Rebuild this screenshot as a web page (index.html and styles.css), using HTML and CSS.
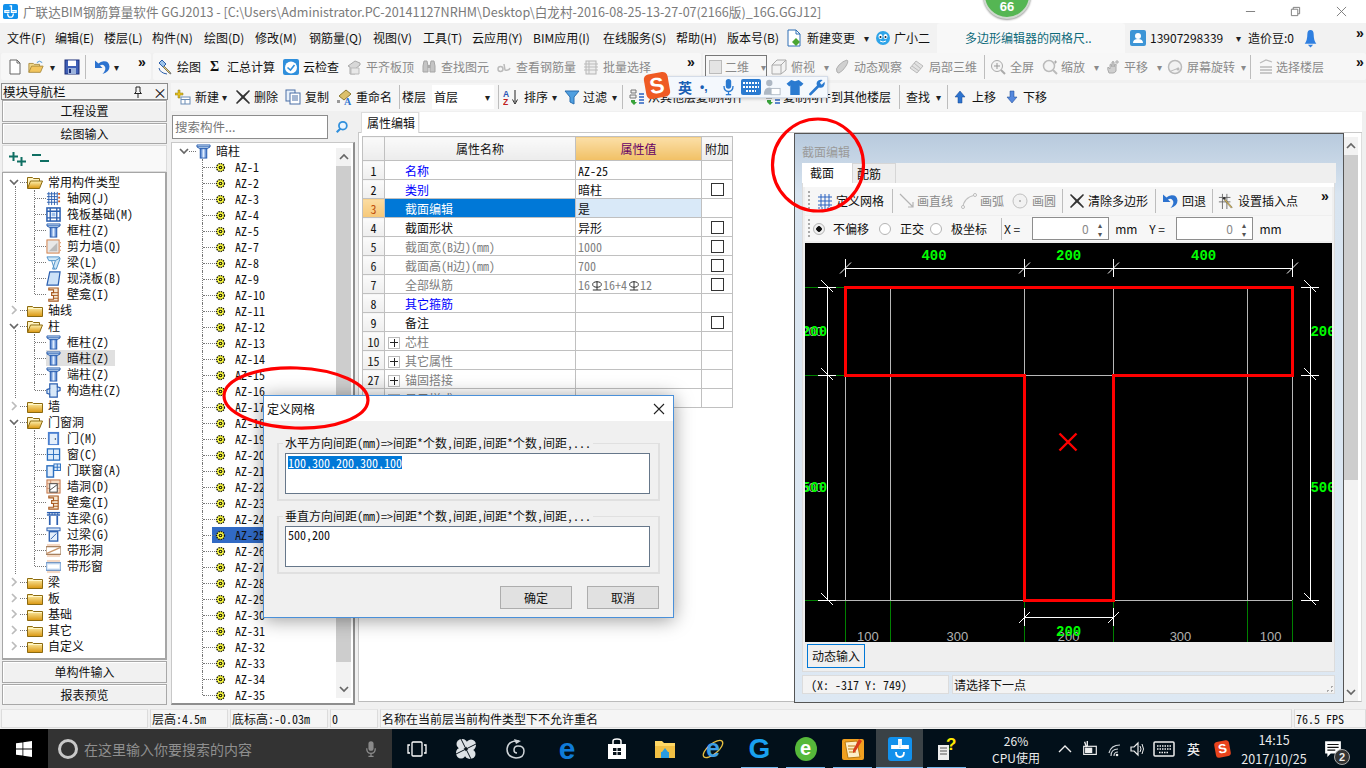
FILE: index.html
```html
<!DOCTYPE html>
<html lang="zh-CN">
<head>
<meta charset="utf-8">
<title>广联达BIM钢筋算量软件 GGJ2013</title>
<link rel="stylesheet" href="styles.css">
</head>
<body>
<svg class="defs" width="0" height="0">
<defs>
<linearGradient id="gy" x1="0" y1="0" x2="0" y2="1"><stop offset="0" stop-color="#fff2b0"/><stop offset="1" stop-color="#d9960f"/></linearGradient>
<linearGradient id="gb" x1="0" y1="0" x2="1" y2="0"><stop offset="0" stop-color="#2a62c0"/><stop offset=".5" stop-color="#dfeeff"/><stop offset="1" stop-color="#2a62c0"/></linearGradient>
<symbol id="new" viewBox="0 0 16 16"><path d="M3 1h7l3 3v11H3z" fill="#fff" stroke="#666"/><path d="M10 1v3h3" fill="none" stroke="#666"/></symbol>
<symbol id="open" viewBox="0 0 18 16"><path d="M1 14V4h5l1 1h6v2" fill="#f0d78a" stroke="#a98a3c"/><path d="M1 14l3-7h13l-3 7z" fill="#f3c65f" stroke="#a98a3c"/><path d="M10 3q3-3 6 0" fill="none" stroke="#3a8ad0"/></symbol>
<symbol id="save" viewBox="0 0 16 16"><rect x="1" y="1" width="14" height="14" fill="#3f5fb5" stroke="#1c2f78"/><rect x="4" y="1.500" width="8" height="5.500" fill="#fff"/><rect x="4" y="9" width="8" height="6" fill="#9db3dc"/><rect x="5" y="10" width="2" height="4" fill="#1c2f78"/></symbol>
<symbol id="undo" viewBox="0 0 16 16"><path d="M1 1.500v7.500h7.500L6 6.500Q8.500 5 10.500 7q2.500 3-2 8 7-2 7-7.500Q15 2 9.500 2.300 6.500 2.500 4.500 4.500z" fill="#2d73cf"/></symbol>
<symbol id="draw" viewBox="0 0 16 16"><path d="M5 1l4 4-3 3-4-4z" fill="#9cc4ea" stroke="#2b5ea8"/><path d="M6 8l6 6 2 1-1-2-6-6" fill="#f3d65a" stroke="#777"/><path d="M2 9q1 5 8 6" fill="none" stroke="#2b5ea8"/></symbol>
<symbol id="cloud" viewBox="0 0 16 16"><rect x="0" y="0" width="16" height="16" rx="2" fill="#2f8fdc"/><circle cx="8" cy="8.500" r="6" fill="#fff"/><path d="M4.500 8.500l3 2.500 4-5" fill="none" stroke="#2f8fdc" stroke-width="1.600"/></symbol>
<symbol id="align" viewBox="0 0 16 16"><path d="M2 7l7-5 5 2v2l-5 4v5H4V8z" fill="#d8d8d8" stroke="#aaa"/><path d="M5 9h8v6H5z" fill="#e8e8e8" stroke="#bbb"/></symbol>
<symbol id="binoc" viewBox="0 0 16 16"><path d="M2 7l1-5h3l1 5v6H2zM9 7l1-5h3l1 5v6H9z" fill="#c4c4c4" stroke="#a5a5a5"/><rect x="6.500" y="6" width="3" height="3" fill="#aaa"/></symbol>
<symbol id="rebar" viewBox="0 0 16 16"><circle cx="4.500" cy="10" r="2.500" fill="none" stroke="#bbb" stroke-width="1.500"/><path d="M8 5l1 6q4 1 5-2" fill="none" stroke="#bbb" stroke-width="1.500"/></symbol>
<symbol id="batch" viewBox="0 0 16 16"><rect x="3" y="2" width="10" height="13" fill="#eee" stroke="#b5b5b5"/><path d="M1 5h14M1 8h14M1 11h14M6 2v13" stroke="#bbb" fill="none"/></symbol>
<symbol id="cube" viewBox="0 0 16 16"><path d="M1 6l5-5h9v10l-5 4H1z" fill="#f3f3f3" stroke="#aaa"/><path d="M1 6h9v9M10 6l5-5" fill="none" stroke="#aaa"/></symbol>
<symbol id="orbit" viewBox="0 0 16 16"><path d="M3 13q-2-3 2-7t8-5q2 1-1 6t-7 7q-1 0-2-1z" fill="#d0d0d0" stroke="#b0b0b0"/></symbol>
<symbol id="local" viewBox="0 0 16 16"><path d="M1 9l6-7 7 5-6 7z" fill="#e2e2e2" stroke="#bbb"/><path d="M5 4l7 6M3 7l7 5" stroke="#bbb"/></symbol>
<symbol id="full" viewBox="0 0 16 16"><circle cx="7" cy="7" r="5.500" fill="#f4f4f4" stroke="#aaa"/><path d="M11 11l4 4" stroke="#aaa" stroke-width="2"/><path d="M7 4v6M4 7h6" stroke="#999"/></symbol>
<symbol id="zoom" viewBox="0 0 16 16"><circle cx="7" cy="7" r="5.500" fill="#f4f4f4" stroke="#bbb" stroke-width="1.500"/><path d="M11 11l4 4" stroke="#bbb" stroke-width="2"/><path d="M12 3h3M13.500 1.500v3" stroke="#aaa"/></symbol>
<symbol id="pan" viewBox="0 0 16 16"><path d="M4 14q-2-4-1-6l2 2V6q0-1 1-1l1 3V3q1-1 2 0v5l1-3q2 0 1 2v5q-1 2-3 2z" fill="#cfcfcf" stroke="#aaa"/><path d="M12 1v4M10 3h4" stroke="#aaa"/></symbol>
<symbol id="rot" viewBox="0 0 16 16"><circle cx="8" cy="8" r="6.500" fill="#f2f2f2" stroke="#bbb" stroke-width="1.500"/><path d="M4 12l8-3" stroke="#bbb"/><circle cx="11" cy="10" r="1.500" fill="#bbb"/></symbol>
<symbol id="floor" viewBox="0 0 16 16"><path d="M2 4l6-3 6 2M2 8h12M2 11h12M2 14h12" fill="none" stroke="#bbb" stroke-width="1.300"/></symbol>
<symbol id="newc" viewBox="0 0 16 16"><path d="M3 1v3H0v2h3v3h2V6h3V4H5V1z" fill="#e6c020" stroke="#8a7a10" stroke-width=".5"/><rect x="6" y="8" width="9" height="7" fill="#fff" stroke="#6a8cb5"/><path d="M6 10.500h9M10 10.500V15" stroke="#6a8cb5"/></symbol>
<symbol id="x" viewBox="0 0 16 16"><path d="M2 1l6 5.500L14 1l1 1-5.500 6L15 14l-1 1-6-5.500L2 15l-1-1 5.500-6L1 2z" fill="#333"/></symbol>
<symbol id="copy" viewBox="0 0 16 16"><rect x="1" y="1" width="9" height="11" fill="#e8f1fb" stroke="#4a6fa5"/><rect x="5" y="4" width="10" height="11" fill="#fff" stroke="#4a6fa5"/><path d="M7 7h6M7 9h6M7 11h6" stroke="#4a6fa5"/></symbol>
<symbol id="rename" viewBox="0 0 16 16"><path d="M3 7l7-6 5 4-7 6z" fill="#dcc06a" stroke="#8c7a30"/><text x="8" y="16" font-size="10" font-weight="700" font-family="Liberation Serif" fill="#2d73cf">A</text><rect x="1" y="11" width="3" height="3" fill="#999"/></symbol>
<symbol id="sort" viewBox="0 0 16 16"><text x="0" y="7.500" font-size="8.500" font-weight="700" font-family="Liberation Sans" fill="#2a56b5">A</text><text x="0" y="16" font-size="8.500" font-weight="700" font-family="Liberation Sans" fill="#c02020">Z</text><path d="M12 1v12M9.500 10.500L12 15l2.500-4.500" fill="none" stroke="#222"/></symbol>
<symbol id="filter" viewBox="0 0 16 16"><path d="M1 2h14l-5 6v7l-4-2V8z" fill="#4f9fe0" stroke="#2a6fb0"/></symbol>
<symbol id="copyto" viewBox="0 0 16 16"><path d="M2 1h5v3H2z" fill="#eee" stroke="#777"/><path d="M1 6h6v3H1z" fill="#eee" stroke="#777"/><path d="M2 11h4v2h2l-3 3-3-3z" fill="#38a23a"/><path d="M10 5h5M10 8h5M10 11h5M10 14h5" stroke="#2a62c0" stroke-width="1.400"/></symbol>
<symbol id="up" viewBox="0 0 12 14"><path d="M6 1l5 6H8v6H4V7H1z" fill="#2d73cf" stroke="#16458c" stroke-width=".5"/></symbol>
<symbol id="down" viewBox="0 0 12 14"><path d="M6 13l5-6H8V1H4v6H1z" fill="#5588dd" stroke="#16458c" stroke-width=".5"/></symbol>
<symbol id="search" viewBox="0 0 16 16"><circle cx="9" cy="6.500" r="4.500" fill="#eaf5ff" stroke="#2f8fdc" stroke-width="2"/><path d="M6 10l-4 4" stroke="#2f8fdc" stroke-width="2.500"/></symbol>
<symbol id="doc" viewBox="0 0 14 18"><path d="M1 1h8l4 4v12H1z" fill="#fff" stroke="#2f6fb5"/><path d="M9 1v4h4" fill="none" stroke="#2f6fb5"/><path d="M9 9l4 4-4 4-4-4z" fill="#4aa531"/></symbol>
<symbol id="mascot" viewBox="0 0 16 16"><circle cx="8" cy="8" r="7" fill="#2fa4e8"/><ellipse cx="5.500" cy="6.500" rx="2" ry="2.500" fill="#fff"/><ellipse cx="10.500" cy="6.500" rx="2" ry="2.500" fill="#fff"/><circle cx="5.500" cy="7" r="1" fill="#123"/><circle cx="10.500" cy="7" r="1" fill="#123"/><path d="M5 11q3 2 6 0" stroke="#fff" fill="none"/></symbol>
<symbol id="user" viewBox="0 0 16 16"><rect width="16" height="16" rx="2" fill="#3d95d6"/><circle cx="8" cy="6" r="3" fill="#fff"/><path d="M3 13q0-4 5-4t5 4z" fill="#fff"/></symbol>
<symbol id="bell" viewBox="0 0 12 18"><path d="M6 1q3 0 3 4 0 6 2.500 9H.5Q3 11 3 5q0-4 3-4z" fill="#2f7fe0"/><path d="M3.500 15h5L6 17.500z" fill="#2f7fe0"/></symbol>
<symbol id="pin" viewBox="0 0 10 12"><path d="M3 1h4v5l1.500 1.500h-7L3 6zM5 8v4" fill="none" stroke="#222"/></symbol>
<symbol id="pluses" viewBox="0 0 17 16"><path d="M3.500 1v3.500H0v2h3.500V10h2V6.500H9v-2H5.500V1z" fill="#0f6f63"/><path d="M11.500 6v3.500H8v2h3.500V15h2v-3.500H17v-2h-3.500V6z" fill="#0f6f63"/></symbol>
<symbol id="minuses" viewBox="0 0 17 9"><path d="M0 0h9v2H0zM8 6h9v2H8z" fill="#0f6f63"/></symbol>
<symbol id="col" viewBox="0 0 16 16"><path d="M1 1h14v2l-3 2H4L1 3z" fill="#cfe3f7" stroke="#2b5fb0"/><path d="M1 3h14" stroke="#2b5fb0"/><rect x="4.500" y="5" width="7" height="10" fill="url(#gb)" stroke="#2b5fb0"/></symbol>
<symbol id="fc" viewBox="0 0 16 13"><path d="M.5 12.500v-10h5l1 1h9v9z" fill="url(#gy)" stroke="#8c6a10"/><path d="M1 4.500h14" stroke="#fff7c8"/></symbol>
<symbol id="fo" viewBox="0 0 16 13"><path d="M.5 12V1.500h5l1 1h6v2.500" fill="#fff4c2" stroke="#8c6a10"/><path d="M.5 12.500l3-7.500h12l-3 7.500z" fill="url(#gy)" stroke="#8c6a10"/></symbol>
<symbol id="gear" viewBox="0 0 12 12"><circle cx="6" cy="6" r="4.300" fill="#ffff40" stroke="#111" stroke-width="1.500" stroke-dasharray="1.500 1"/><circle cx="6" cy="6" r="2" fill="#111"/><circle cx="6" cy="6" r=".9" fill="#ffff40"/></symbol>
<symbol id="gridn" viewBox="0 0 16 16"><path d="M1 3h11M1 6h11M1 9h11M1 12h11M3 1v14M6 1v14M9 1v14M12 1v14" stroke="#2b5fb0" fill="none"/><path d="M14 2v2M14 6v2M14 10v2" stroke="#d05a20" stroke-width="2"/></symbol>
<symbol id="raft" viewBox="0 0 16 16"><rect x="1" y="1" width="14" height="14" fill="#fff" stroke="#2b5fb0" stroke-width="1.600"/><path d="M1 4.500h14M1 11.500h14M4.500 1v14M11.500 1v14" stroke="#2b5fb0" stroke-width="1.400"/><rect x="6" y="6" width="4" height="4" fill="#9fc0ea"/></symbol>
<symbol id="wall" viewBox="0 0 16 16"><rect x="1" y="1" width="13" height="14" fill="#e8e8e8" stroke="#d07a40"/><path d="M3 13l9-9v9z" fill="#bbb"/><path d="M15 4h1M15 8h1M15 12h1" stroke="#d07a40"/></symbol>
<symbol id="beam" viewBox="0 0 16 16"><path d="M1 2h13l1 2-4 11H7l3-9H3z" fill="#cfe7f7" stroke="#4a8fc8"/><path d="M6 6l3 9M10 6l5-3" stroke="#4a8fc8" fill="none"/></symbol>
<symbol id="slab" viewBox="0 0 16 16"><path d="M4 1h11l-2 14H1z" fill="#cde2f8" stroke="#2b5fb0" stroke-width="1.300"/></symbol>
<symbol id="niche" viewBox="0 0 16 16"><path d="M3 1h10v14H3v-2h5V9H6V6h2V3H3z" fill="#f6e7d2" stroke="#a85a20" stroke-width="1.200"/><path d="M8 6h5M8 9h5M8 12h5" stroke="#a85a20"/></symbol>
<symbol id="gzz" viewBox="0 0 16 16"><path d="M4 1h8v3l3 1v3l-3 1v6H4v-3L1 11V7l3-1z" fill="#d8e8f8" stroke="#2b5fb0" stroke-width="1.300"/><path d="M12 4v5M4 6v6" stroke="#2b5fb0"/></symbol>
<symbol id="door" viewBox="0 0 16 16"><rect x="2" y="1" width="12" height="14" fill="#4a7fd0"/><rect x="4" y="3" width="8" height="11" fill="#e4effb"/><circle cx="10" cy="8.500" r=".8" fill="#234"/></symbol>
<symbol id="win" viewBox="0 0 16 16"><rect x="1.500" y="2" width="13" height="12" fill="#dcebfb" stroke="#2b6fc0" stroke-width="1.400"/><path d="M8 2v12M1.500 8h13" stroke="#2b6fc0"/></symbol>
<symbol id="dw" viewBox="0 0 16 16"><rect x="1" y="3" width="7" height="12" fill="#e4effb" stroke="#2b6fc0" stroke-width="1.500"/><rect x="8.500" y="1" width="7" height="7" fill="#dcebfb" stroke="#2b6fc0"/><path d="M12 1v7M8.500 4.500h7" stroke="#2b6fc0"/></symbol>
<symbol id="hole" viewBox="0 0 16 16"><rect x="1" y="1" width="14" height="14" fill="#f6dcc4" stroke="#c07040"/><path d="M1 5h14M1 10h14M5 1v4M11 10v5" stroke="#d09070"/><rect x="4" y="5" width="8" height="9" fill="#fff" stroke="#444"/><path d="M4 12l8-6" stroke="#444"/></symbol>
<symbol id="ll" viewBox="0 0 16 16"><rect x="1" y="1" width="14" height="4" fill="#2b5fb0"/><path d="M4 5v10M12 5v10" stroke="#2b5fb0" stroke-width="1.800"/><path d="M1 3h14" stroke="#fff" stroke-dasharray="2 1"/></symbol>
<symbol id="gl" viewBox="0 0 16 16"><rect x="1" y="1" width="14" height="3" fill="#d7e6f7" stroke="#2b5fb0"/><rect x="3.500" y="5" width="9" height="10" fill="#e4effb" stroke="#2b5fb0" stroke-width="1.400"/><path d="M5 13l6-6" stroke="#2b5fb0"/></symbol>
<symbol id="sh" viewBox="0 0 16 16"><path d="M1 1h14v14H1z" fill="#f4d8c4"/><rect x="0" y="4" width="16" height="8" fill="#fff" stroke="#8a5a30"/><path d="M1 11l14-6" stroke="#c89468" stroke-width="1.500"/></symbol>
<symbol id="sw" viewBox="0 0 16 16"><path d="M1 1h14v14H1z" fill="#f4d8c4"/><rect x="0" y="4" width="16" height="8" fill="#d7e6f7" stroke="#4a7fc0"/><rect x="2" y="6" width="12" height="4" fill="#fff"/></symbol>
<symbol id="grid2" viewBox="0 0 16 16"><path d="M1 4h14M1 8h14M1 12h14M4 1v13M8 1v13M12 1v13" stroke="#2b62c0" fill="none"/><path d="M1 15h14" stroke="#2b62c0" stroke-dasharray="2 1"/></symbol>
<symbol id="line" viewBox="0 0 16 16"><path d="M1 1l13 13M9 14h5V9" fill="none" stroke="#b4b4b4" stroke-width="1.200"/></symbol>
<symbol id="arc" viewBox="0 0 16 16"><path d="M2 15Q2 5 14 2" fill="none" stroke="#c0c0c0" stroke-width="1.200"/><circle cx="2" cy="14" r="1.500" fill="#fff" stroke="#bbb"/><circle cx="14" cy="2" r="1.500" fill="#fff" stroke="#bbb"/></symbol>
<symbol id="circ" viewBox="0 0 16 16"><circle cx="8" cy="8" r="7" fill="#f2f2f2" stroke="#c0c0c0"/><circle cx="8" cy="8" r="1" fill="#aaa"/></symbol>
<symbol id="ins" viewBox="0 0 18 18"><path d="M5 1v17M10 1v17M1 5h13M1 10h13" stroke="#666" fill="none"/><path d="M8 7l8 9-1 1-8-9z" fill="#e9c040" stroke="#555" stroke-width=".6"/><circle cx="7" cy="6" r="1.500" fill="#333"/></symbol>
<symbol id="reb" viewBox="0 0 10 10"><ellipse cx="5" cy="4" rx="4.300" ry="2.700" fill="none" stroke="currentColor"/><path d="M5 .5v9M.8 9.500h8.400" stroke="currentColor"/></symbol>
<symbol id="chev" viewBox="0 0 10 10"><path d="M1 3l4 4 4-4" fill="none" stroke="#666" stroke-width="1.700"/></symbol>
<symbol id="chevr" viewBox="0 0 10 10"><path d="M3 1l4 4-4 4" fill="none" stroke="#bbb" stroke-width="1.700"/></symbol>
<symbol id="chevu" viewBox="0 0 10 10"><path d="M1 7l4-4 4 4" fill="none" stroke="#666" stroke-width="1.700"/></symbol>
<symbol id="mic" viewBox="0 0 14 20"><rect x="4" y="1" width="6" height="11" rx="3" fill="currentColor"/><path d="M2 9q0 6 5 6t5-6M7 15v3M4 18.500h6" fill="none" stroke="currentColor" stroke-width="1.500"/></symbol>
<symbol id="kb" viewBox="0 0 22 16"><rect x="1" y="1" width="20" height="14" rx="1" fill="none" stroke="currentColor" stroke-width="1.500"/><path d="M4 5h14M4 8h14M6 11.500h10" stroke="currentColor" stroke-width="1.500" stroke-dasharray="1.500 1"/></symbol>
<symbol id="kbb" viewBox="0 0 20 16"><rect x="0" y="0" width="20" height="16" rx="2" fill="#2a7ad0"/><path d="M2 4h16M2 8h16M5 12h10" stroke="#fff" stroke-width="1.800" stroke-dasharray="2 1"/></symbol>
<symbol id="imeu" viewBox="0 0 20 18"><circle cx="7" cy="4" r="3.500" fill="#aeb8c4"/><path d="M1 17q0-8 6-8t5 8z" fill="#aeb8c4"/><rect x="9" y="10" width="10" height="7" fill="#fff" stroke="#aeb8c4"/></symbol>
<symbol id="shirt" viewBox="0 0 18 18"><path d="M5 1l4 1.500L13 1l5 4-3 3-1-1v10H4V7L3 8 0 5z" fill="#2a7ad0"/></symbol>
<symbol id="wrench" viewBox="0 0 18 18"><path d="M17 3l-3 3-2-2 3-3q-4-1-6 2-1 2 0 4l-8 8q-1 1 0 2t2 0l8-8q3 1 5-1 2-2 1-5z" fill="#2a7ad0"/></symbol>
<symbol id="win10" viewBox="0 0 16 16"><path d="M0 2.300l6.500-.9v6.200H0zM7.300 1.300L16 0v7.600H7.300zM0 8.400h6.500v6.200L0 13.700zM7.300 8.400H16V16l-8.700-1.300z" fill="#fff"/></symbol>
<symbol id="tv" viewBox="0 0 20 16"><rect x="5" y="1" width="10" height="14" rx="1" fill="none" stroke="#fff" stroke-width="1.300"/><path d="M3 4H1v8h2M17 4h2v8h-2" fill="none" stroke="#fff" stroke-width="1.300"/></symbol>
<symbol id="fan" viewBox="0 0 22 22"><g fill="#dde2e6"><ellipse cx="7" cy="6" rx="5.500" ry="5"/><ellipse cx="16" cy="7" rx="5" ry="5.500"/><ellipse cx="15" cy="16" rx="5.500" ry="5"/><ellipse cx="6" cy="15" rx="5" ry="5.500"/></g><circle cx="11" cy="11" r="1.500" fill="#0a141c"/><path d="M11 11L6 1M11 11l10-5M11 11l5 10M11 11L1 16" stroke="#0a141c"/></symbol>
<symbol id="swirl" viewBox="0 0 22 22"><path d="M14 3Q3 2 2 11q0 8 9 9 8 0 8-7 0-5-6-5-4 0-4 4 0 3 3 3" fill="none" stroke="#cfd4d8" stroke-width="1.500"/><path d="M9 1l7 2-5 3z" fill="#cfd4d8"/></symbol>
<symbol id="store" viewBox="0 0 20 22"><path d="M1 6h18v15H1z" fill="#fff"/><path d="M6 6V3q0-2 4-2t4 2v3" fill="none" stroke="#fff" stroke-width="1.500"/><path d="M6 10h3.500v3H6zM10.500 10H14v3h-3.500zM6 14h3.500v3H6zM10.500 14H14v3h-3.500z" fill="#08131b"/></symbol>
<symbol id="fold" viewBox="0 0 22 20"><path d="M1 2h7l2 2h11v15H1z" fill="#ffd764"/><path d="M1 7h20v12H1z" fill="#f2c044"/><rect x="7" y="13" width="8" height="6" fill="#2a9be0"/><path d="M8 13l3-4 3 4z" fill="#2a9be0"/></symbol>
<symbol id="note" viewBox="0 0 24 24"><rect x="1" y="2" width="22" height="21" rx="2" fill="#f0a020"/><path d="M4 5l12-1 3 16-12 1z" fill="#fdeec8" stroke="#b97a10"/><path d="M7 9h7M7 12h8M8 15h7" stroke="#b97a10"/><path d="M18 2l3 2-7 11-2 1 0-3z" fill="#d83c1c"/></symbol>
<symbol id="gld" viewBox="0 0 24 24"><path d="M11 3h2v6h7v2h-7a4 4 0 0 1-2 0H4V9h7zM8 15q0 5 4 5t4-5" fill="none" stroke="#fff" stroke-width="1.800"/></symbol>
<symbol id="gldsm" viewBox="0 0 16 16"><rect width="16" height="16" rx="2" fill="#1291ec"/><path d="M7 2h2v5h5v2H9V7.500M7 7H2v2h5M5 10q0 4 3 4t3-4" fill="none" stroke="#fff" stroke-width="1.400"/></symbol>
<symbol id="iering" viewBox="0 0 24 24"><ellipse cx="12" cy="12" rx="12" ry="5" transform="rotate(-40 12 12)" fill="none" stroke="#e8c040" stroke-width="1.300"/><text x="12" y="20" text-anchor="middle" font-size="25" font-weight="700" font-family="Liberation Sans" fill="#3d9fe6">e</text></symbol>
<symbol id="pc" viewBox="0 0 20 24"><rect x="1" y="8" width="11" height="15" fill="#eee"/><path d="M3 11h7M3 14h7M3 17h7" stroke="#555"/></symbol>
<symbol id="caret" viewBox="0 0 14 10"><path d="M1 8l6-6 6 6" fill="none" stroke="#eee" stroke-width="1.400"/></symbol>
<symbol id="batt" viewBox="0 0 18 20"><rect x="2" y="7" width="14" height="9" fill="none" stroke="#eee" stroke-width="1.300"/><rect x="3.500" y="8.500" width="8" height="6" fill="#eee"/><path d="M3 2l2 6M6 1v6" stroke="#eee" stroke-width="1.500"/></symbol>
<symbol id="wifi" viewBox="0 0 16 16"><path d="M3 15Q3 8 10 8M1 12Q3 4 12 4M6 15q0-4 4-4" fill="none" stroke="#cfd4d8" stroke-width="1.200"/><circle cx="9" cy="14" r="1.300" fill="#eee"/></symbol>
<symbol id="vol" viewBox="0 0 16 16"><path d="M1 6h3l4-4v12l-4-4H1z" fill="none" stroke="#eee" stroke-width="1.200"/><path d="M10 5q2 3 0 6M12 3q3 5 0 10" fill="none" stroke="#eee"/></symbol>
<symbol id="notif" viewBox="0 0 16 16"><path d="M1 1h14v11H6l-3 3v-3H1z" fill="#fff"/><path d="M3 4h10M3 6.500h10M3 9h7" stroke="#111"/></symbol>
</defs>
</svg>

<div class="app">
  <header class="titlebar">
    <svg class="logo"><use href="#gldsm"/></svg>
    <span class="title">广联达BIM钢筋算量软件 GGJ2013 - [C:\Users\Administrator.PC-20141127NRHM\Desktop\白龙村-2016-08-25-13-27-07(2166版)_16G.GGJ12]</span>
    <div class="winctl">
      <svg viewBox="0 0 12 12"><path d="M1 6h10" stroke="#777" fill="none"/></svg>
      <svg viewBox="0 0 12 12"><path d="M1.500 3.500h7v7h-7zM3.500 3.500v-2h7v7h-2" stroke="#777" fill="none"/></svg>
      <svg viewBox="0 0 12 12"><path d="M1 1l10 10M11 1L1 11" stroke="#777" fill="none"/></svg>
    </div>
  </header>

  <nav class="menubar">
    <span>文件(F)</span><span>编辑(E)</span><span>楼层(L)</span><span>构件(N)</span><span>绘图(D)</span><span>修改(M)</span><span>钢筋量(Q)</span><span>视图(V)</span><span>工具(T)</span><span>云应用(Y)</span><span>BIM应用(I)</span><span>在线服务(S)</span><span>帮助(H)</span><span>版本号(B)</span>
    <svg class="i doc"><use href="#doc"/></svg><span>新建变更</span><b class="arr">▾</b>
    <svg class="i"><use href="#mascot"/></svg><span>广小二</span>
    <span class="newsbox">多边形编辑器的网格尺..</span>
    <svg class="i"><use href="#user"/></svg><span>13907298339</span><b class="arr">▾</b><span>造价豆:0</span>
    <svg class="i bell"><use href="#bell"/></svg><b class="more">»</b>
  </nav>

  <div class="toolrow">
    <div class="tb tb-a">
      <svg class="i"><use href="#new"/></svg><svg class="i"><use href="#open"/></svg><b class="arr">▾</b><svg class="i"><use href="#save"/></svg><i class="sep"></i><svg class="i"><use href="#undo"/></svg><b class="arr">▾</b><b class="more">»</b>
    </div>
    <div class="tb tb-b">
      <svg class="i"><use href="#draw"/></svg><span>绘图</span><b class="sigma">Σ</b><span>汇总计算</span><svg class="i"><use href="#cloud"/></svg><span>云检查</span>
      <svg class="i"><use href="#align"/></svg><span class="dis">平齐板顶</span><svg class="i"><use href="#binoc"/></svg><span class="dis">查找图元</span><svg class="i"><use href="#rebar"/></svg><span class="dis">查看钢筋量</span><svg class="i"><use href="#batch"/></svg><span class="dis">批量选择</span><b class="more">»</b>
    </div>
    <div class="tb tb-c">
      <div class="combo2d"><i class="sq"></i><span class="dis">二维</span><b class="arr dis">▾</b></div>
      <svg class="i"><use href="#cube"/></svg><span class="dis">俯视</span><b class="arr dis">▾</b>
      <svg class="i"><use href="#orbit"/></svg><span class="dis">动态观察</span>
      <svg class="i"><use href="#local"/></svg><span class="dis">局部三维</span><i class="sep"></i>
      <svg class="i"><use href="#full"/></svg><span class="dis">全屏</span>
      <svg class="i"><use href="#zoom"/></svg><span class="dis">缩放</span><b class="arr dis">▾</b>
      <svg class="i"><use href="#pan"/></svg><span class="dis">平移</span><b class="arr dis">▾</b>
      <svg class="i"><use href="#rot"/></svg><span class="dis">屏幕旋转</span><b class="arr dis">▾</b><i class="sep"></i>
      <svg class="i"><use href="#floor"/></svg><span class="dis">选择楼层</span><b class="more">»</b>
    </div>
  </div>

  <main class="main">
    <aside class="nav">
      <div class="navhead"><span>模块导航栏</span><svg class="pin"><use href="#pin"/></svg><span class="cls">×</span></div>
      <button class="navbtn">工程设置</button>
      <button class="navbtn">绘图输入</button>
      <div class="plusbar"><svg class="pm1"><use href="#pluses"/></svg><svg class="pm2"><use href="#minuses"/></svg></div>
      <div class="tree navtree sim">
        <div class="r g"><svg class="c"><use href="#chev"/></svg><svg class="f"><use href="#fo"/></svg><span>常用构件类型</span></div>
        <div class="sub">
          <div class="r k"><i class="cn"></i><svg class="i"><use href="#gridn"/></svg><span>轴网(J)</span></div>
          <div class="r k"><i class="cn"></i><svg class="i"><use href="#raft"/></svg><span>筏板基础(M)</span></div>
          <div class="r k"><i class="cn"></i><svg class="i"><use href="#col"/></svg><span>框柱(Z)</span></div>
          <div class="r k"><i class="cn"></i><svg class="i"><use href="#wall"/></svg><span>剪力墙(Q)</span></div>
          <div class="r k"><i class="cn"></i><svg class="i"><use href="#beam"/></svg><span>梁(L)</span></div>
          <div class="r k"><i class="cn"></i><svg class="i"><use href="#slab"/></svg><span>现浇板(B)</span></div>
          <div class="r k"><i class="cn"></i><svg class="i"><use href="#niche"/></svg><span>壁龛(I)</span></div>
        </div>
        <div class="r g"><svg class="c"><use href="#chevr"/></svg><svg class="f"><use href="#fc"/></svg><span>轴线</span></div>
        <div class="r g"><svg class="c"><use href="#chev"/></svg><svg class="f"><use href="#fo"/></svg><span>柱</span></div>
        <div class="sub">
          <div class="r k"><i class="cn"></i><svg class="i"><use href="#col"/></svg><span>框柱(Z)</span></div>
          <div class="r k on"><i class="cn"></i><svg class="i"><use href="#col"/></svg><span>暗柱(Z)</span></div>
          <div class="r k"><i class="cn"></i><svg class="i"><use href="#col"/></svg><span>端柱(Z)</span></div>
          <div class="r k"><i class="cn"></i><svg class="i"><use href="#gzz"/></svg><span>构造柱(Z)</span></div>
        </div>
        <div class="r g"><svg class="c"><use href="#chevr"/></svg><svg class="f"><use href="#fc"/></svg><span>墙</span></div>
        <div class="r g"><svg class="c"><use href="#chev"/></svg><svg class="f"><use href="#fo"/></svg><span>门窗洞</span></div>
        <div class="sub">
          <div class="r k"><i class="cn"></i><svg class="i"><use href="#door"/></svg><span>门(M)</span></div>
          <div class="r k"><i class="cn"></i><svg class="i"><use href="#win"/></svg><span>窗(C)</span></div>
          <div class="r k"><i class="cn"></i><svg class="i"><use href="#dw"/></svg><span>门联窗(A)</span></div>
          <div class="r k"><i class="cn"></i><svg class="i"><use href="#hole"/></svg><span>墙洞(D)</span></div>
          <div class="r k"><i class="cn"></i><svg class="i"><use href="#niche"/></svg><span>壁龛(I)</span></div>
          <div class="r k"><i class="cn"></i><svg class="i"><use href="#ll"/></svg><span>连梁(G)</span></div>
          <div class="r k"><i class="cn"></i><svg class="i"><use href="#gl"/></svg><span>过梁(G)</span></div>
          <div class="r k"><i class="cn"></i><svg class="i"><use href="#sh"/></svg><span>带形洞</span></div>
          <div class="r k"><i class="cn"></i><svg class="i"><use href="#sw"/></svg><span>带形窗</span></div>
        </div>
        <div class="r g"><svg class="c"><use href="#chevr"/></svg><svg class="f"><use href="#fc"/></svg><span>梁</span></div>
        <div class="r g"><svg class="c"><use href="#chevr"/></svg><svg class="f"><use href="#fc"/></svg><span>板</span></div>
        <div class="r g"><svg class="c"><use href="#chevr"/></svg><svg class="f"><use href="#fc"/></svg><span>基础</span></div>
        <div class="r g"><svg class="c"><use href="#chevr"/></svg><svg class="f"><use href="#fc"/></svg><span>其它</span></div>
        <div class="r g"><svg class="c"><use href="#chevr"/></svg><svg class="f"><use href="#fc"/></svg><span>自定义</span></div>
      </div>
      <button class="navbtn">单构件输入</button>
      <button class="navbtn">报表预览</button>
    </aside>

    <section class="content">
      <div class="tb tb2">
        <svg class="i"><use href="#newc"/></svg><span>新建</span><b class="arr">▾</b>
        <svg class="i"><use href="#x"/></svg><span>删除</span>
        <svg class="i"><use href="#copy"/></svg><span>复制</span>
        <svg class="i"><use href="#rename"/></svg><span>重命名</span><i class="sep"></i>
        <span>楼层</span><div class="combofloor"><span>首层</span><b class="arr">▾</b></div><i class="sep"></i>
        <svg class="i"><use href="#sort"/></svg><span>排序</span><b class="arr">▾</b>
        <svg class="i"><use href="#filter"/></svg><span>过滤</span><b class="arr">▾</b><i class="sep"></i>
        <svg class="i"><use href="#copyto"/></svg><span>从其他层复制构件</span>
        <svg class="i"><use href="#copyto"/></svg><span>复制构件到其他楼层</span><i class="sep"></i>
        <span>查找</span><b class="arr">▾</b><i class="sep"></i>
        <svg class="i up"><use href="#up"/></svg><span>上移</span>
        <svg class="i up"><use href="#down"/></svg><span>下移</span>
      </div>
      <div class="work">
        <div class="comp">
          <div class="searchrow"><div class="searchbox">搜索构件...</div><svg class="i"><use href="#search"/></svg></div>
          <div class="tree comptree sim">
            <div class="list">
              <div class="r h"><svg class="c"><use href="#chev"/></svg><svg class="i"><use href="#col"/></svg><span>暗柱</span></div>
              <div class="sub2">
                <div class="r a"><i class="cn"></i><svg class="gear"><use href="#gear"/></svg><span>AZ-1</span></div>
                <div class="r a"><i class="cn"></i><svg class="gear"><use href="#gear"/></svg><span>AZ-2</span></div>
                <div class="r a"><i class="cn"></i><svg class="gear"><use href="#gear"/></svg><span>AZ-3</span></div>
                <div class="r a"><i class="cn"></i><svg class="gear"><use href="#gear"/></svg><span>AZ-4</span></div>
                <div class="r a"><i class="cn"></i><svg class="gear"><use href="#gear"/></svg><span>AZ-5</span></div>
                <div class="r a"><i class="cn"></i><svg class="gear"><use href="#gear"/></svg><span>AZ-7</span></div>
                <div class="r a"><i class="cn"></i><svg class="gear"><use href="#gear"/></svg><span>AZ-8</span></div>
                <div class="r a"><i class="cn"></i><svg class="gear"><use href="#gear"/></svg><span>AZ-9</span></div>
                <div class="r a"><i class="cn"></i><svg class="gear"><use href="#gear"/></svg><span>AZ-10</span></div>
                <div class="r a"><i class="cn"></i><svg class="gear"><use href="#gear"/></svg><span>AZ-11</span></div>
                <div class="r a"><i class="cn"></i><svg class="gear"><use href="#gear"/></svg><span>AZ-12</span></div>
                <div class="r a"><i class="cn"></i><svg class="gear"><use href="#gear"/></svg><span>AZ-13</span></div>
                <div class="r a"><i class="cn"></i><svg class="gear"><use href="#gear"/></svg><span>AZ-14</span></div>
                <div class="r a"><i class="cn"></i><svg class="gear"><use href="#gear"/></svg><span>AZ-15</span></div>
                <div class="r a"><i class="cn"></i><svg class="gear"><use href="#gear"/></svg><span>AZ-16</span></div>
                <div class="r a"><i class="cn"></i><svg class="gear"><use href="#gear"/></svg><span>AZ-17</span></div>
                <div class="r a"><i class="cn"></i><svg class="gear"><use href="#gear"/></svg><span>AZ-18</span></div>
                <div class="r a"><i class="cn"></i><svg class="gear"><use href="#gear"/></svg><span>AZ-19</span></div>
                <div class="r a"><i class="cn"></i><svg class="gear"><use href="#gear"/></svg><span>AZ-20</span></div>
                <div class="r a"><i class="cn"></i><svg class="gear"><use href="#gear"/></svg><span>AZ-21</span></div>
                <div class="r a"><i class="cn"></i><svg class="gear"><use href="#gear"/></svg><span>AZ-22</span></div>
                <div class="r a"><i class="cn"></i><svg class="gear"><use href="#gear"/></svg><span>AZ-23</span></div>
                <div class="r a"><i class="cn"></i><svg class="gear"><use href="#gear"/></svg><span>AZ-24</span></div>
                <div class="r a sel"><i class="cn"></i><svg class="gear"><use href="#gear"/></svg><span>AZ-25</span></div>
                <div class="r a"><i class="cn"></i><svg class="gear"><use href="#gear"/></svg><span>AZ-26</span></div>
                <div class="r a"><i class="cn"></i><svg class="gear"><use href="#gear"/></svg><span>AZ-27</span></div>
                <div class="r a"><i class="cn"></i><svg class="gear"><use href="#gear"/></svg><span>AZ-28</span></div>
                <div class="r a"><i class="cn"></i><svg class="gear"><use href="#gear"/></svg><span>AZ-29</span></div>
                <div class="r a"><i class="cn"></i><svg class="gear"><use href="#gear"/></svg><span>AZ-30</span></div>
                <div class="r a"><i class="cn"></i><svg class="gear"><use href="#gear"/></svg><span>AZ-31</span></div>
                <div class="r a"><i class="cn"></i><svg class="gear"><use href="#gear"/></svg><span>AZ-32</span></div>
                <div class="r a"><i class="cn"></i><svg class="gear"><use href="#gear"/></svg><span>AZ-33</span></div>
                <div class="r a"><i class="cn"></i><svg class="gear"><use href="#gear"/></svg><span>AZ-34</span></div>
                <div class="r a"><i class="cn"></i><svg class="gear"><use href="#gear"/></svg><span>AZ-35</span></div>
              </div>
            </div>
            <div class="sbar sbar-tree"><svg class="sa"><use href="#chevu"/></svg><i class="thumb"></i><svg class="sa"><use href="#chev"/></svg></div>
          </div>
        </div>
        <div class="props">
          <div class="tabline"><span class="tab">属性编辑</span></div>
          <div class="pane sim">
            <table class="ptable">
              <colgroup><col class="c1"><col class="c2"><col class="c3"><col class="c4"></colgroup>
              <tr class="head"><th></th><th>属性名称</th><th class="hv">属性值</th><th>附加</th></tr>
              <tr><td class="n">1</td><td class="nm bl">名称</td><td class="v">AZ-25</td><td></td></tr>
              <tr><td class="n">2</td><td class="nm bl">类别</td><td class="v">暗柱</td><td class="ck"><i></i></td></tr>
              <tr class="cur"><td class="n">3</td><td class="nm">截面编辑</td><td class="v">是</td><td></td></tr>
              <tr><td class="n">4</td><td class="nm">截面形状</td><td class="v">异形</td><td class="ck"><i></i></td></tr>
              <tr class="gr"><td class="n">5</td><td class="nm">截面宽(B边)(mm)</td><td class="v">1000</td><td class="ck"><i></i></td></tr>
              <tr class="gr"><td class="n">6</td><td class="nm">截面高(H边)(mm)</td><td class="v">700</td><td class="ck"><i></i></td></tr>
              <tr class="gr"><td class="n">7</td><td class="nm">全部纵筋</td><td class="v">16<svg class="reb"><use href="#reb"/></svg>16+4<svg class="reb"><use href="#reb"/></svg>12</td><td class="ck"><i></i></td></tr>
              <tr><td class="n">8</td><td class="nm bl">其它箍筋</td><td class="v"></td><td></td></tr>
              <tr><td class="n">9</td><td class="nm">备注</td><td class="v"></td><td class="ck"><i></i></td></tr>
              <tr class="gr"><td class="n">10</td><td class="nm"><u class="plus"></u>芯柱</td><td class="v"></td><td></td></tr>
              <tr class="gr"><td class="n">15</td><td class="nm"><u class="plus"></u>其它属性</td><td class="v"></td><td></td></tr>
              <tr class="gr"><td class="n">27</td><td class="nm"><u class="plus"></u>锚固搭接</td><td class="v"></td><td></td></tr>
              <tr class="gr"><td class="n">42</td><td class="nm"><u class="plus"></u>显示样式</td><td class="v"></td><td></td></tr>
            </table>
          </div>
        </div>
      </div>
    </section>
  </main>

  <footer class="status sim">
    <span class="s0"></span><span class="s1">层高:4.5m</span><span class="s2">底标高:-0.03m</span><span class="s3">0</span><span class="s4">名称在当前层当前构件类型下不允许重名</span><span class="s5">76.5 FPS</span>
  </footer>

  <div class="taskbar">
    <div class="start"><svg><use href="#win10"/></svg></div>
    <div class="tsearch"><i class="cortana"></i><span>在这里输入你要搜索的内容</span><svg class="tmic"><use href="#mic"/></svg></div>
    <div class="tapps">
      <div class="ta"><svg class="tv"><use href="#tv"/></svg></div>
      <div class="ta"><svg class="t22"><use href="#fan"/></svg></div>
      <div class="ta"><svg class="t22"><use href="#swirl"/></svg></div>
      <div class="ta"><span class="edge">e</span></div>
      <div class="ta"><svg class="t22"><use href="#store"/></svg></div>
      <div class="ta"><svg class="t22"><use href="#fold"/></svg></div>
      <div class="ta"><svg class="t24"><use href="#iering"/></svg></div>
      <div class="ta run"><span class="gg">G</span></div>
      <div class="ta run"><span class="ie360">e</span></div>
      <div class="ta run"><svg class="t24"><use href="#note"/></svg></div>
      <div class="ta run act"><i class="gldt"><svg class="t24"><use href="#gld"/></svg></i></div>
      <div class="ta run"><span class="qm"><svg class="t24"><use href="#pc"/></svg><b>?</b></span></div>
    </div>
    <div class="tray">
      <i></i>
      <div class="cpu"><span>26%</span><span>CPU使用</span></div>
      <i></i>
      <svg class="car"><use href="#caret"/></svg>
      <svg class="t18"><use href="#batt"/></svg>
      <svg class="t16"><use href="#wifi"/></svg>
      <svg class="t16"><use href="#vol"/></svg>
      <svg class="tkb"><use href="#kb"/></svg>
      <span class="yy">英</span>
      <span class="sgt">S</span>
      <div class="clock"><span>14:15</span><span>2017/10/25</span></div>
      <div class="ntf"><svg class="t18"><use href="#notif"/></svg><b>2</b></div>
    </div>
  </div>
</div>

<!-- floating editor window -->
<div class="float">
  <div class="ftitle">截面编辑</div>
  <div class="ftabs"><span class="ft on">截面</span><span class="ft">配筋</span></div>
  <div class="fpane">
    <div class="ftb1">
      <i class="grip"></i><svg class="i"><use href="#grid2"/></svg><span>定义网格</span><i class="sep"></i>
      <svg class="i"><use href="#line"/></svg><span class="dis">画直线</span>
      <svg class="i"><use href="#arc"/></svg><span class="dis">画弧</span>
      <svg class="i"><use href="#circ"/></svg><span class="dis">画圆</span><i class="sep"></i>
      <svg class="i"><use href="#x"/></svg><span>清除多边形</span><i class="sep"></i>
      <svg class="i"><use href="#undo"/></svg><span>回退</span><i class="sep"></i>
      <svg class="i"><use href="#ins"/></svg><span>设置插入点</span><b class="more">»</b>
    </div>
    <div class="ftb2">
      <i class="grip"></i><i class="radio on"></i><span>不偏移</span><i class="radio"></i><span>正交</span><i class="radio"></i><span>极坐标</span><i class="sep"></i>
      <span>X =</span><div class="spin"><span>0</span><em><u>▴</u><u>▾</u></em></div><span class="mm">mm</span>
      <span>Y =</span><div class="spin"><span>0</span><em><u>▴</u><u>▾</u></em></div><span class="mm">mm</span>
    </div>
    <svg class="canvas" viewBox="0 0 527 399" width="527" height="399">
      <rect width="527" height="399" fill="#000"/>
      <g stroke="#008000" fill="none">
        <path d="M0 44.500h13M31 44.500h9M0 132.500h13M31 132.500h9M0 357.500h13"/>
        <path d="M40.500 357v42M85.500 357v42M219.500 357v8M219.500 382v17M308.500 357v8M308.500 382v17M442.500 357v42M487.500 357v42"/>
      </g>
      <g stroke="#b8b8b8" fill="none">
        <path d="M85.500 44v313M219.500 44v88M308.500 44v88M442.500 44v313M40.500 132v225M487.500 132v225M219 132.500h90M31 357.500h456"/>
      </g>
      <g stroke="#fff" fill="none">
        <path d="M40.500 25.500h447M40.500 16v18M219.500 16v18M308.500 16v18M487.500 16v18M35 30.500l11-11M214 30.500l11-11M303 30.500l11-11M482 30.500l11-11"/>
        <path d="M22.500 44v313M13 44.500h18M13 132.500h18M13 357.500h18M16 37l12 12M16 125l12 12M16 350l12 12"/>
        <path d="M505.500 44v313M496 44.500h18M496 132.500h18M496 357.500h18M499 37l12 12M499 125l12 12M499 350l12 12"/>
        <path d="M219.500 374.500h89M219.500 365v18M308.500 365v18M214 380l11-11M303 380l11-11"/>
      </g>
      <g class="cvg">
        <text x="62.800" y="398" class="gt">100</text><text x="152.400" y="398" class="gt">300</text><text x="263.600" y="398" class="gt">200</text><text x="375.500" y="398" class="gt">300</text><text x="465.700" y="398" class="gt">100</text>
        <text x="7" y="93" class="gt">200</text><text x="7" y="249" class="gt">500</text>
      </g>
      <g class="cvd">
        <text x="129" y="17">400</text><text x="263.600" y="17">200</text><text x="398.600" y="17">400</text>
        <text x="9.500" y="93">200</text><text x="9.500" y="249">500</text>
        <text x="518" y="93">200</text><text x="518" y="249">500</text>
        <text x="263.600" y="392.500">200</text>
      </g>
      <path d="M40.500 44.500H487.500V132.500H308.500V357.500H219.500V132.500H40.500Z" fill="none" stroke="#f00" stroke-width="3"/>
      <path d="M254.500 190.500l17 17M271.500 190.500l-17 17" stroke="#f00" stroke-width="2.400" fill="none"/>
    </svg>
    <div class="dyn"><span>动态输入</span></div>
  </div>
  <div class="fstatus sim"><span class="fs1">(X: -317 Y: 749)</span><span class="fs2">请选择下一点</span></div>
</div>
<div class="sbar sbar-main"><svg class="sa"><use href="#chevu"/></svg><i class="thumb"></i><svg class="sa"><use href="#chev"/></svg></div>

<!-- modal dialog -->
<div class="dialog sim">
  <div class="dtitle"><span>定义网格</span><svg viewBox="0 0 12 12"><path d="M1 1l10 10M11 1L1 11" stroke="#222" stroke-width="1.100" fill="none"/></svg></div>
  <div class="dbody">
    <fieldset><legend>水平方向间距(mm)=&gt;间距*个数,间距,间距*个数,间距,...</legend><div class="ta1"><mark>100,300,200,300,100</mark></div></fieldset>
    <fieldset><legend>垂直方向间距(mm)=&gt;间距*个数,间距,间距*个数,间距,...</legend><div class="ta1">500,200</div></fieldset>
    <div class="dbtns"><button>确定</button><button>取消</button></div>
  </div>
</div>

<!-- annotations, IME, badge -->
<div class="badge">66</div>
<div class="ime">
  <span class="sg">S</span>
  <span class="ying">英</span><b class="dot">•,</b><svg class="imi mc"><use href="#mic"/></svg><svg class="imi kbi"><use href="#kbb"/></svg><svg class="imi"><use href="#imeu"/></svg><svg class="imi"><use href="#shirt"/></svg><svg class="imi"><use href="#wrench"/></svg>
</div>
<svg class="ring ring1" viewBox="0 0 152 68"><ellipse cx="76" cy="34" rx="72" ry="30" transform="rotate(2 76 34)" fill="none" stroke="#f00" stroke-width="3.200"/></svg>
<svg class="ring ring2" viewBox="0 0 100 100"><ellipse cx="50" cy="50" rx="45.500" ry="46" fill="none" stroke="#f00" stroke-width="3.200"/></svg>
</body>
</html>
```
FILE: styles.css
```css
*{box-sizing:border-box}
html,body{margin:0;padding:0;height:100%}
body{width:1366px;height:768px;overflow:hidden;position:relative;font:12px/16px "Noto Sans CJK SC","Liberation Sans",sans-serif;color:#111;background:#f0f0f0}
.defs{position:absolute}
.app{display:flex;flex-direction:column;width:1366px;height:768px}
.sim{font-feature-settings:"hwid";font-family:"Noto Sans CJK SC",sans-serif}
.i{width:16px;height:16px;display:block}
.arr{font-weight:400;font-size:10px;color:#222;line-height:16px}
.more{font:700 14px/12px "Liberation Sans",sans-serif;color:#111;margin:0 0 10px -2px}
.dis{color:#8a8a8a}
.sep{display:block;width:1px;height:24px;background:#bdbdbd}

/* title bar */
.titlebar{height:23px;flex:none;background:#fff;display:flex;align-items:center;padding-left:3px}
.logo{width:15px;height:15px;margin-right:5px}
.title{font-size:12.600px;color:#7a7a7a;white-space:nowrap;flex:1}
.winctl{display:grid;grid-template-columns:45px 46px 46px;width:137px;margin-right:1.500px;justify-items:center}
.winctl svg{width:11px;height:11px}

/* menu */
.menubar{height:30px;flex:none;background:#f2f2f2;display:grid;align-items:center;padding-left:7px;
grid-template-columns:48px 49px 48px 52px 51px 54px 64px 50px 49px 61px 70px 73px 51px 60px 20px 57px 11px 19px 43px 193px 20px 86px 12px 56px 54px 10px;white-space:nowrap}
.menubar .doc{width:14px;height:18px}
.newsbox{background:#f8f8f8;height:30px;line-height:30px;width:188px;color:#0e6a7a;padding-left:28px;font-size:12px;margin-top:0;border-radius:3px 3px 0 0}
.menubar .bell{width:13px;height:19px}

/* toolbars */
.toolrow{height:29px;flex:none;display:flex;gap:2px;padding-left:1px}
.tb{display:grid;align-items:center;background:#f7f7f7;height:27px;white-space:nowrap;border-radius:2px;justify-items:start}
.tb-a{width:150px;padding-left:6px;grid-template-columns:21px 22px 14px 21px 9px 20px 26px auto}
.tb-b{width:548px;padding-left:4px;grid-template-columns:20px 33px 17px 56px 20px 43px 20px 55px 20px 55px 20px 67px 20px 86px auto}
.tb-c{flex:1;padding-left:2px;grid-template-columns:66px 20px 33px 10px 20px 55px 20px 55px 6px 20px 32px 19px 33px 11px 19px 33px 10px 20px 54px 9px 8px 18px 82px auto}
.sigma{font:700 14px "Liberation Serif",serif}
.combo2d{width:62px;height:23px;border:1px solid #777;display:flex;align-items:center;padding-left:3px;gap:3px;background:#f7f7f7}
.combo2d .sq{width:15px;height:14px;background:#e4e4e4;border:1px solid #bbb;display:block}
.combo2d .arr{margin-left:9px}

/* main */
.main{height:626px;flex:none;display:flex;margin-top:0}
.nav{width:171px;flex:none;display:flex;flex-direction:column;padding:1px 3px 0 1px;height:625px}
.navhead{height:17px;border:1px solid #8c8c8c;background:#f4f4f4;display:grid;grid-template-columns:1fr 20px 14px;align-items:center;padding-left:1px;line-height:14px;font-size:12.500px;margin-bottom:0}
.pin{width:10px;height:12px}
.cls{font-size:14px}
.navbtn{height:21.500px;margin:0 1px 1px;flex:none;background:#f1f1f1;border:1px solid #a8a8a8;box-shadow:inset 1px 1px 0 #fff;font:12px "Noto Sans CJK SC",sans-serif;color:#111;padding:0}
.plusbar{height:27px;flex:none;margin:0 1px;background:#f9f9f9;border:1px solid #dcdcdc;display:flex;align-items:center;gap:6px;padding-left:6px}
.pm1{width:17px;height:16px}
.pm2{width:17px;height:9px}
.tree{background:#fff;border:2px solid #a6a6a6}
.navtree{flex:none;height:488px;margin:0 1px 1px;padding-top:1px;overflow:hidden;border-width:1px 2px 2px 1px;position:relative}
.r{height:16px;display:flex;align-items:center;white-space:nowrap;line-height:16px}
.r .c{width:10px;height:10px;margin-left:6px;flex:none}
.navtree .r.g{background:repeating-linear-gradient(90deg,#777 0 1px,transparent 1px 2px) no-repeat 17px 8px/7px 1px}
.navtree .r.g .f{width:16px;height:13px;margin:0 5px 0 8px;flex:none}
.sub{position:relative}
.sub::before{content:"";position:absolute;left:12px;top:-4px;bottom:0;border-left:1px dotted #777}
.navtree .r.k{padding-left:31px}
.navtree .r.k .cn,.sub2 .cn{display:block;width:12px;height:16px;border-left:1px dotted #777;position:relative;flex:none}
.cn::after{content:"";position:absolute;left:0;top:8px;width:100%;border-top:1px dotted #777}
.sub .r:last-child .cn{height:8px;align-self:flex-start}
.sub2 .r:last-child .cn{height:8px;align-self:flex-start}
.r.k .i{margin-right:6px;width:15px;height:15px;flex:none}
.r.on{background:linear-gradient(#e0e0e0,#e0e0e0) no-repeat 43px 0/69px 16px}

/* content */
.content{flex:1;display:flex;flex-direction:column;min-width:0}
.tb2{height:28px;margin-top:1px;padding-left:4px;background:#f6f6f6;border-radius:0;grid-template-columns:20px 27px 13px 19px 31px 20px 31px 20px 43px 3px 30px 66px 5px 21px 28px 12px 19px 29px 10px 7px 19px 117px 18px 116px 7px 30px 11px 7px 18px 34px 17px auto;flex:none}
.tb2 .up{width:12px;height:14px}
.combofloor{width:62px;height:24px;background:#fff;display:flex;align-items:center;justify-content:space-between;padding:0 4px 0 2px}
.work{flex:1;display:flex;min-height:0}
.comp{width:184px;flex:none;display:flex;flex-direction:column;padding-left:1px}
.searchrow{height:30px;display:flex;align-items:center;gap:7px;flex:none;margin-top:1px}
.searchrow .i{width:14px;height:14px}
.searchbox{width:156px;height:24px;background:#fff;border:1px solid #8c8c8c;color:#777;padding-left:2px;line-height:22px;font-size:12.500px}
.comptree{flex:none;height:563px;display:flex;border-width:1px 2px 2px 1px;overflow:hidden;border-color:#c8c8c8 #8e8e8e #8e8e8e #c8c8c8;position:relative;margin-left:-1px}
.list{flex:1;min-width:0}
.r.h{background:repeating-linear-gradient(90deg,#777 0 1px,transparent 1px 2px) no-repeat 17px 8px/7px 1px}
.r.h .i{margin:0 5px 0 7px;flex:none;width:15px;height:15px}
.r.h .c{margin-left:7px}
.sub2 .r.a{padding-left:30px}
.sub2 .cn{width:13px}
.gear{width:11px;height:11px;flex:none;margin-right:9px}
.r.a.sel{background:linear-gradient(#316ac5,#316ac5) no-repeat 40px 0/100px 16px}
.sbar{display:flex;flex-direction:column;align-items:center;background:#f2f2f2}
.sbar .sa{width:10px;height:10px;flex:none;margin:4px 0}
.sbar .thumb{display:block;background:#cdcdcd;width:100%}
.sbar-tree{width:15px;flex:none;margin:5px 2px 5px 0}
.sbar-tree .thumb{height:496px;margin-bottom:auto}

/* property pane */
.props{flex:1;min-width:0;padding-left:3px;position:relative}
.tabline{height:21px;border-bottom:1px solid #c8c8c8;padding-left:3px;background:linear-gradient(#f0f0f0,#f0f0f0) no-repeat 0 0/62px 100%,#fff;display:flex;margin-top:1px;margin-right:4px}
.tab{width:58px;height:21px;background:#fff;border:1px solid #dcdcdc;border-bottom:0;padding-left:5px;line-height:20px}
.pane{height:569px;background:#fff;border-left:1px solid #c8c8c8;border-bottom:1px solid #bbb;border-right:1px solid #ddd;padding:3px 0 0 3px;margin-right:4px}
.ptable{border-collapse:collapse;table-layout:fixed;width:370px;line-height:15px;border:1px solid #b8b8b8}
.ptable .c1{width:22px}.ptable .c2{width:191px}.ptable .c3{width:126px}.ptable .c4{width:31px}
.ptable td,.ptable th{border:1px solid #c0c0c0;padding:0;height:19px;font-weight:400;white-space:nowrap;overflow:hidden}
.head th{height:24px;background:linear-gradient(#fafafa,#ececec)}
.head .hv{background:linear-gradient(#fbdfa8,#f1c064);color:#660066}
.n{text-align:center;background:linear-gradient(#fbfbfb,#eee)}
.nm{padding-left:20px!important}
.bl{color:#00f}
.v{padding-left:2px!important}
.gr td{color:#808080}
.gr .n{color:#222}
.cur .n{background:linear-gradient(#fbdca2,#f6c878);color:#c0500c}
.cur .nm{background:#0078d7;color:#fff}
.cur .v{background:#d9e9f8}
.ck{text-align:center;line-height:0}
.ck i{display:inline-block;width:13px;height:13px;border:1px solid #333;background:#fff;vertical-align:middle}
.plus{display:inline-block;width:12px;height:12px;border:1px solid #bbb;margin:0 5px 0 -17px;vertical-align:-2px;background:linear-gradient(#222,#222) no-repeat center/8px 1px,linear-gradient(#222,#222) no-repeat center/1px 8px;text-decoration:none}
.reb{width:10px;height:11px;margin:0 1px 0 2px;vertical-align:-1px;color:#333}

/* status */
.status{height:21px;flex:none;display:grid;grid-template-columns:147px 78px 98px 48px 912px 1fr;gap:2px;padding:1px 0 0 1px;background:#f0f0f0;line-height:18px}
.status span{border:1px solid #dcdcdc;border-top-color:#e4e4e4;padding-left:1px;height:19px;white-space:nowrap;overflow:hidden;background:#f5f5f5}

/* taskbar */
.taskbar{height:40px;flex:none;background:#02101a;display:flex;color:#fff}
.start{width:48px;background:#000;display:flex;align-items:center;justify-content:center}
.start svg{width:16px;height:16px}
.tsearch{width:344px;background:#333;display:flex;align-items:center;padding-left:10px;color:#8f8f8f;font-size:14px}
.cortana{display:block;width:20px;height:20px;border:3px solid #c8c8c8;border-radius:50%;margin-right:6px;flex:none}
.tsearch span{flex:1}
.tmic{width:12px;height:18px;margin-right:15px;color:#8a8a8a}
.tapps{display:grid;grid-template-columns:49px 50px 50px 52px 47px 49px 48px 45px 47px 47px 47px 47px;height:40px}
.ta{display:flex;align-items:center;justify-content:center;position:relative}
.run::after{content:"";position:absolute;left:4px;right:4px;bottom:0;height:2px;background:#76b9ed}
.act{background:#3a4246}
.act::after{left:0;right:0}
.tv{width:20px;height:16px}
.t22{width:22px;height:22px}
.t24{width:24px;height:24px}
.t18{width:18px;height:18px}
.t16{width:16px;height:16px}
.edge{font:700 30px/30px "Liberation Sans";color:#0f7bd8}
.ie360{width:22px;height:24px;border-radius:50%;background:#56b83a;color:#fff;font:700 20px/22px "Liberation Sans";text-align:center}
.gg{font:700 28px/30px "Liberation Sans";color:#19a1f0}
.gldt{display:flex;width:24px;height:24px;border-radius:3px;background:#1291ec;align-items:center;justify-content:center}
.qm{position:relative;display:block;width:24px;height:24px}
.qm b{position:absolute;right:2px;top:-2px;font:700 17px/20px "Liberation Sans";color:#ffe900}
.tray{flex:1;display:grid;grid-template-columns:13px 66px 5px 22px 28px 23px 21px 32px 27px 30px 74px 44px 1fr;align-items:center;justify-items:center;color:#ececec;height:40px}
.cpu,.clock{display:flex;flex-direction:column;align-items:center;line-height:17px}
.clock{font-size:12.500px;line-height:19px}
.car{width:14px;height:10px}
.tkb{width:22px;height:16px;color:#eee}
.yy{font-size:13px;font-weight:500}
.sgt{width:15px;height:16px;background:#e8431c;border-radius:3px;transform:rotate(-10deg);color:#fff;font:700 13px/16px "Liberation Sans";text-align:center}
.ntf{position:relative;width:18px;height:18px}
.ntf b{position:absolute;right:-8px;bottom:-7px;width:16px;height:16px;border-radius:50%;background:#333;border:1px solid #aaa;font:700 11px/14px "Liberation Sans";text-align:center}

/* floating editor */
.float{position:absolute;left:794px;top:133px;width:550px;height:570px;border:1px solid #555;background:linear-gradient(#b8cadd,#d8e4f0 60px,#dde8f3);padding:9px 7px 0 7px}
.ftitle{height:18px;line-height:18px;color:#9a9a9a;margin-bottom:2px}
.ftabs{display:flex;height:20px;background:#efefef}
.ft{width:44px;height:20px;background:#eee;border:1px solid #d6d6d6;border-bottom:0;padding-left:4px;line-height:20px}
.ft.on{width:50px;background:#fff;border:0;padding-left:8px}
.fpane{height:489px;border:1px solid #dcdcdc;border-top:0;padding:4px 2px 0;margin-right:1px;background:linear-gradient(#fff,#fff) no-repeat 0 0/100% 4px,#efefef;position:relative}
.ftb1{height:28px;background:#f6f6f6;display:grid;align-items:center;justify-items:start;padding-left:3px;grid-template-columns:9px 19px 56px 7px 18px 44px 19px 32px 20px 30px 7px 19px 67px 7px 20px 30px 6px 20px 85px auto;white-space:nowrap}
.grip{display:block;width:2px;height:20px;background:repeating-linear-gradient(#aaa 0 2px,transparent 2px 4px)}
.ftb2{height:25px;margin-top:1px;background:#f7f7f7;display:grid;align-items:center;justify-items:start;padding-left:3px;grid-template-columns:5px 20px 46px 21px 30px 21px 50px 3px 27.600px 77px 40.600px 26.700px 77px auto;white-space:nowrap}
.ftb2 .sep{height:22px}
.radio{display:block;width:12px;height:12px;border-radius:50%;border:1px solid #b4b4b4;background:#fff}
.radio.on{background:radial-gradient(#111 0 2.500px,#f0f0f0 3px)}
.spin{width:77px;height:23px;border:1px solid #8e8e8e;background:#fff;display:flex;align-items:center;justify-content:flex-end;color:#888;padding-right:2px}
.spin em{display:flex;flex-direction:column;font-style:normal;font-size:8px;line-height:9px;color:#555;margin-left:9px;width:8px}
.spin u{text-decoration:none}
.mm{padding-left:6.600px}
.canvas{display:block;margin-top:2px}
.cvg text{fill:#b0b0b0;font:13px "Liberation Sans",sans-serif;text-anchor:middle}
.cvd text{fill:#0f0;font:700 14px "Liberation Mono",monospace;text-anchor:middle}
.dyn{height:30px;padding:2px 0 0 2px}
.dyn span{display:block;width:58px;height:24px;border:1px solid #0078d7;line-height:22px;text-align:center;background:#f0f0f0}
.fstatus{margin-top:3px;height:19px;display:grid;grid-template-columns:147px 1fr;gap:3px;margin-right:1px;line-height:17px}
.fs1,.fs2{background:#f3f3f3;border:1px solid #dcdcdc;padding-left:8px}
.fs2{padding-left:1px;background:radial-gradient(#aaa 0 1px,transparent 1px) right 1px bottom 1px/3px 3px no-repeat,radial-gradient(#aaa 0 1px,transparent 1px) right 5px bottom 1px/3px 3px no-repeat,radial-gradient(#aaa 0 1px,transparent 1px) right 1px bottom 5px/3px 3px no-repeat,#f3f3f3}
.sbar-main{position:absolute;left:1344px;top:137px;width:14px;height:564px;background:#f2f2f2}
.sbar-main .thumb{height:325px;margin-bottom:auto}

/* dialog */
.dialog{position:absolute;left:263px;top:395px;width:411px;height:223px;background:#f0f0f0;border:1px solid #4a90d9;box-shadow:0 2px 18px rgba(0,0,0,.4)}
.dtitle{height:25px;background:#fff;display:flex;align-items:center;justify-content:space-between;padding:0 8px 0 3px;line-height:25px}
.dtitle svg{width:12px;height:12px}
.dbody{padding:0 13px}
fieldset{margin:0;padding:0;border:2px solid #e0e0e0;border-width:1px 2px 2px;height:58px;position:relative}
.dbody fieldset:first-child{margin-top:22px}
fieldset+fieldset{margin-top:15px}
legend{position:absolute;left:4px;top:-9px;background:#f0f0f0;padding:0 2px;line-height:16px;white-space:nowrap}
.ta1{position:absolute;left:6px;top:9px;width:365px;height:41px;background:#fff;border:1px solid #66778a;padding:0 2px;line-height:15px}
mark{background:#0078d7;color:#fff;display:inline-block;line-height:13px;height:13px;margin-top:2px}
.dbtns{display:flex;justify-content:flex-end;gap:15px;margin-top:12px;padding-right:1px}
.dbtns button{width:72px;height:23px;background:#e1e1e1;border:1px solid #adadad;font:12px "Noto Sans CJK SC",sans-serif;color:#111;padding:0}

/* overlays */
.badge{position:absolute;left:983px;top:-29px;width:48px;height:48px;border-radius:50%;background:#55b653;border:2px solid #cfd8cf;color:#fff;font:700 13px/16px "Liberation Sans";text-align:center;padding-top:26px;box-shadow:0 1px 2px rgba(0,0,0,.4)}
.ime{position:absolute;left:667px;top:76px;width:161px;height:22px;background:#f4f8fd;border:1px solid #d4dce8;display:grid;grid-template-columns:22px 22px 19px 22px 23px 22px auto;align-items:center;justify-items:start;padding-left:10px;box-shadow:0 1px 3px rgba(0,0,0,.2)}
.sg{position:absolute;left:-23px;top:-4px;width:24px;height:25px;border-radius:5px;background:#ef5a23;color:#fff;font:700 22px/25px "Liberation Sans";text-align:center;transform:rotate(-10deg);z-index:1}
.ying{color:#1a5fb4;font-size:14px;font-weight:700;line-height:16px}
.dot{color:#1a5fb4;font:700 12px/12px "Liberation Sans"}
.imi{width:18px;height:17px;color:#2a7ad0}
.mc{width:13px;height:18px}
.kbi{width:20px;height:16px}
.ring{position:absolute;overflow:visible;pointer-events:none}
.ring1{left:219.500px;top:363.500px;width:152px;height:68px}
.ring2{left:768px;top:115px;width:100px;height:100px}
```
